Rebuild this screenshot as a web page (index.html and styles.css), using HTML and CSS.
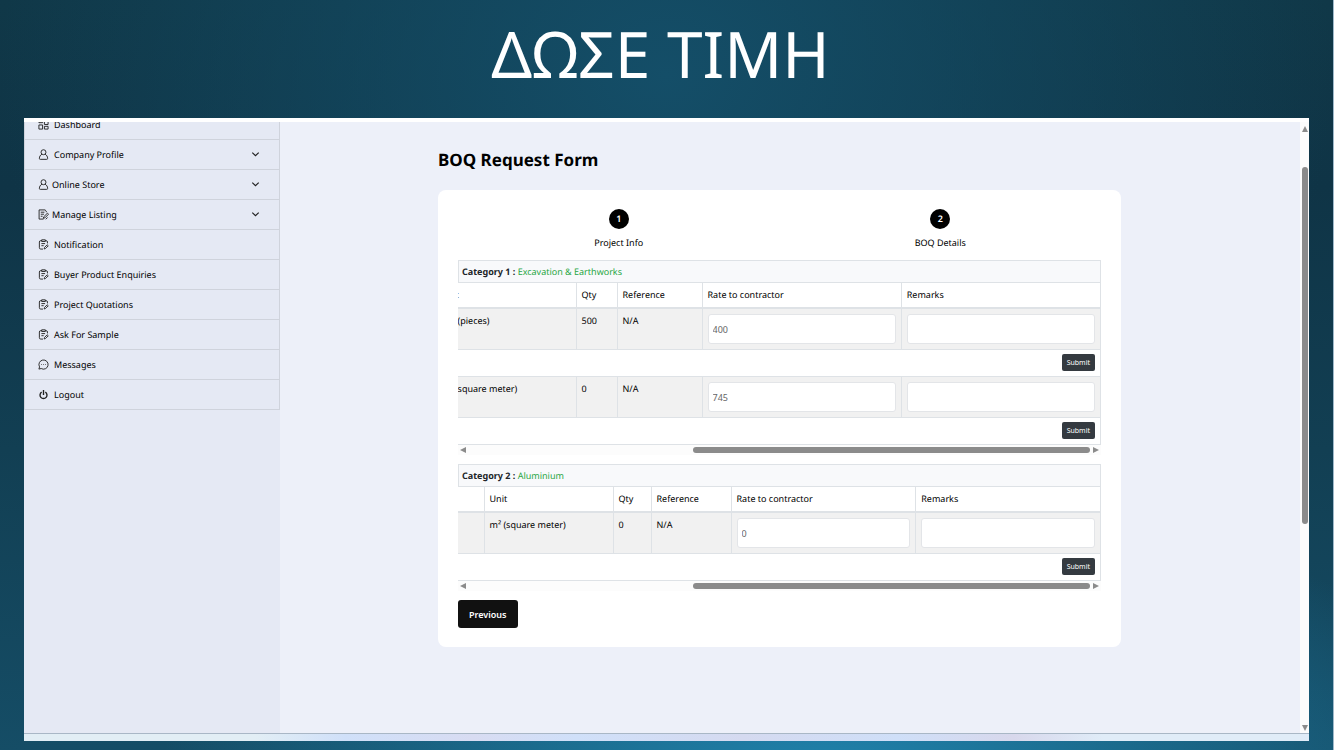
FILE: index.html
```html
<!DOCTYPE html>
<html lang="el">
<head>
<meta charset="utf-8">
<meta name="viewport" content="width=device-width, initial-scale=1">
<title>ΔΩΣΕ ΤΙΜΗ</title>
<link rel="stylesheet" href="styles.css">
</head>
<body>
<svg class="sprite" aria-hidden="true">
  <symbol id="i-grid" viewBox="0 0 12 12"><path d="M1 1h4v3H1zM1 6.500h4V11H1zM7 1h4v5H7zM7 8h4v3H7z"/></symbol>
  <symbol id="i-user" viewBox="0 0 12 12"><circle cx="6" cy="3.500" r="2.700"/><path d="M4.300 5.600C2.600 6.600 1.500 8.200 1.500 10.300c0 .7.300 1 1 1h7c.7 0 1-.3 1-1 0-2.100-1.100-3.700-2.800-4.700"/></symbol>
  <symbol id="i-edit" viewBox="0 0 12 12"><path d="M9 3.500V2.300L7.700 1H1.200v10H6M3 3.500h4M3 5.700h3.500M3 7.900h2"/><path d="M10.300 4.500l1.200 1.200-4 4-1.700.5.500-1.700zM8.500 11.200l2-2"/></symbol>
  <symbol id="i-clip" viewBox="0 0 12 12"><path d="M4 1.800H3C2 1.800 1.500 2.300 1.500 3.300v6.200c0 1 .5 1.500 1.500 1.500h2.500M8 1.800h.8c1 0 1.500.5 1.500 1.500v1.500M4 .9h4v1.800H4zM3.700 5h4M3.700 7.300h2.500"/><path d="M10 6.300l1.200 1.100-3 3-1.500.5.400-1.600z"/></symbol>
  <symbol id="i-chat" viewBox="0 0 12 12"><path d="M1.700 8.600A5 5 0 1 1 3.500 10.400L1 11z"/><path d="M3.600 6h.7M5.700 6h.7M7.800 6h.7"/></symbol>
  <symbol id="i-power" viewBox="0 0 12 12"><path d="M4 3.400a3.800 3.800 0 1 0 4 0M6 1v5.500"/></symbol>
  <symbol id="i-down" viewBox="0 0 12 12"><path d="M2.500 4L6 7.300 9.500 4"/></symbol>
</svg>
<div class="slide">
  <header class="slide-title"><h1>ΔΩΣΕ ΤΙΜΗ</h1></header>
  <div class="window">
    <div class="viewport">
      <nav class="sidebar">
        <a class="item" href="#"><svg><use href="#i-grid"/></svg>Dashboard</a>
        <a class="item" href="#"><svg><use href="#i-user"/></svg>Company Profile<svg class="chevron"><use href="#i-down"/></svg></a>
        <a class="item tight" href="#"><svg><use href="#i-user"/></svg>Online Store<svg class="chevron"><use href="#i-down"/></svg></a>
        <a class="item tight" href="#"><svg><use href="#i-edit"/></svg>Manage Listing<svg class="chevron"><use href="#i-down"/></svg></a>
        <a class="item" href="#"><svg><use href="#i-clip"/></svg>Notification</a>
        <a class="item" href="#"><svg><use href="#i-clip"/></svg>Buyer Product Enquiries</a>
        <a class="item" href="#"><svg><use href="#i-clip"/></svg>Project Quotations</a>
        <a class="item" href="#"><svg><use href="#i-clip"/></svg>Ask For Sample</a>
        <a class="item" href="#"><svg><use href="#i-chat"/></svg>Messages</a>
        <a class="item" href="#"><svg class="heavy"><use href="#i-power"/></svg>Logout</a>
      </nav>
      <main class="content">
        <h2 class="page-title">BOQ Request Form</h2>
        <form class="card">
          <ol class="steps">
            <li><span class="dot">1</span>Project Info</li>
            <li><span class="dot">2</span>BOQ Details</li>
          </ol>
          <section class="category">
            <h3 class="cat-title">Category 1 : <span>Excavation &amp; Earthworks</span></h3>
            <div class="table-clip">
              <table class="boq boq-one">
                <colgroup><col class="unit"><col class="qty"><col class="ref"><col><col></colgroup>
                <thead><tr><th>Unit</th><th>Qty</th><th>Reference</th><th>Rate to contractor</th><th>Remarks</th></tr></thead>
                <tbody>
                  <tr class="data"><td>pcs (pieces)</td><td>500</td><td>N/A</td><td><input type="text" aria-label="Rate to contractor" value="400"></td><td><input type="text" aria-label="Remarks"></td></tr>
                  <tr class="action"><td colspan="5"><button type="button" class="submit">Submit</button></td></tr>
                  <tr class="data"><td>m² (square meter)</td><td>0</td><td>N/A</td><td><input type="text" aria-label="Rate to contractor" value="745"></td><td><input type="text" aria-label="Remarks"></td></tr>
                  <tr class="action"><td colspan="5"><button type="button" class="submit">Submit</button></td></tr>
                </tbody>
              </table>
            </div>
            <div class="hscroll"><svg viewBox="0 0 6 6"><path d="M6 0v6L0 3z"/></svg><div class="track"><div class="thumb"></div></div><svg viewBox="0 0 6 6"><path d="M0 0v6l6-3z"/></svg></div>
          </section>
          <section class="category">
            <h3 class="cat-title">Category 2 : <span>Aluminium</span></h3>
            <div class="table-clip">
              <table class="boq boq-two">
                <colgroup><col class="lead"><col class="unit"><col class="qty"><col class="ref"><col><col></colgroup>
                <thead><tr><th></th><th>Unit</th><th>Qty</th><th>Reference</th><th>Rate to contractor</th><th>Remarks</th></tr></thead>
                <tbody>
                  <tr class="data"><td></td><td>m² (square meter)</td><td>0</td><td>N/A</td><td><input type="text" aria-label="Rate to contractor" value="0"></td><td><input type="text" aria-label="Remarks"></td></tr>
                  <tr class="action"><td colspan="6"><button type="button" class="submit">Submit</button></td></tr>
                </tbody>
              </table>
            </div>
            <div class="hscroll"><svg viewBox="0 0 6 6"><path d="M6 0v6L0 3z"/></svg><div class="track"><div class="thumb"></div></div><svg viewBox="0 0 6 6"><path d="M0 0v6l6-3z"/></svg></div>
          </section>
          <button type="button" class="previous">Previous</button>
        </form>
      </main>
      <div class="vscroll"><svg viewBox="0 0 6 6"><path d="M3 0l3 6H0z"/></svg><div class="vtrack"><div class="vthumb"></div></div><svg viewBox="0 0 6 6"><path d="M0 0h6L3 6z"/></svg></div>
    </div>
    <div class="taskbar"></div>
  </div>
</div>
</body>
</html>
```

FILE: styles.css
```css
* { box-sizing: border-box; }

body {
  margin: 0;
  font-family: "Noto Sans", sans-serif;
  font-size: 9px;
  line-height: 14px;
  color: #000;
  text-rendering: geometricPrecision;
}

h1, h2, h3, ol { margin: 0; padding: 0; }

.sprite { display: none; }

.slide {
  display: flex;
  flex-direction: column;
  min-height: 100vh;
  padding: 0 24px 9px;
  border-right: 1px solid #9fb9ca;
  background:
    radial-gradient(ellipse 50% 40% at 62% 104%, #2083ad 0%, #2083ad00 100%),
    radial-gradient(ellipse 50% 75% at 50% 10%, #144e68 0%, #144e6800 100%),
    linear-gradient(#103848 0%, #0f3446 25%, #123f53 60%, #154d66 100%);
}

.slide-title {
  display: flex;
  align-items: center;
  justify-content: center;
  height: 118px;
  padding-bottom: 10px;
  padding-right: 12px;
}

.slide-title h1 {
  font-size: 64px;
  font-weight: 400;
  line-height: 88px;
  color: #fff;
}

.window {
  display: flex;
  flex: 1;
  flex-direction: column;
  border-top: 4px solid #fff;
}

.viewport {
  display: flex;
  flex: 1;
  overflow: hidden;
  background: #edf0f9;
}

.sidebar {
  width: 256px;
  margin-top: -12px;
  background: #e5e9f4;
}

.item {
  display: flex;
  align-items: center;
  gap: 5px;
  height: 30px;
  padding: 0 18px 0 13px;
  border: 1px solid #cfd3dc;
  border-top: 0;
  color: #000;
  text-decoration: none;
}

.item.tight { gap: 3px; }

.item svg {
  width: 11px;
  height: 11px;
  fill: none;
  stroke: #222;
  stroke-width: 1;
}

.item .heavy { stroke-width: 1.5; }

.item .chevron {
  margin-left: auto;
  stroke-width: 1.3;
}

.content {
  flex: 1;
  padding: 27px 179px 0 158px;
}

.page-title {
  margin-bottom: 19px;
  font-size: 17px;
  font-weight: 700;
  line-height: 22px;
  color: #000;
}

.card {
  padding: 19px 20px;
  border-radius: 8px;
  background: #fff;
}

.steps {
  display: grid;
  grid-template-columns: 1fr 1fr;
  margin-bottom: 10px;
  list-style: none;
}

.steps li {
  display: flex;
  flex-direction: column;
  align-items: center;
  gap: 7px;
}

.dot {
  width: 20px;
  height: 20px;
  border-radius: 50%;
  background: #000;
  color: #fff;
  font-weight: 600;
  line-height: 20px;
  text-align: center;
}

.category { margin-bottom: 9px; }

.cat-title {
  padding: 4px 3px 3px;
  border: 1px solid #dee2e6;
  border-bottom: 0;
  background: #f8f9fb;
  color: #212529;
  font-size: 9px;
  font-weight: 700;
}

.cat-title span {
  color: #28a745;
  font-weight: 400;
}

.table-clip {
  display: flex;
  justify-content: flex-end;
  overflow: hidden;
}

.boq {
  flex: none;
  width: 100%;
  border-collapse: collapse;
  table-layout: fixed;
}

.boq-one { width: calc(100% + 22px); }
.boq-one .unit { width: 140px; }
.boq-one .qty { width: 41px; }
.boq-one .ref { width: 85px; }
.boq-two .lead { width: 26px; }
.boq-two .unit { width: 129px; }
.boq-two .qty { width: 38px; }
.boq-two .ref { width: 80px; }

.boq th,
.boq td {
  padding: 5px;
  border: 1px solid #dee2e6;
  font-weight: 400;
  text-align: left;
  vertical-align: top;
  white-space: nowrap;
}

.boq th:first-child,
.boq td:first-child { border-left: 0; }

.boq th { border-bottom: 2px solid #dee2e6; }

.data { background: #f1f1f1; }

.data input {
  display: block;
  width: 100%;
  height: 30px;
  padding: 0 4px;
  border: 1px solid #e3e5e8;
  border-radius: 3px;
  background: #fff;
  color: #666;
  font: inherit;
}

.boq .action td {
  padding: 4px 5px 5px;
  text-align: right;
}

.submit {
  display: inline-block;
  height: 17px;
  padding: 0 5px;
  border: 0;
  border-radius: 2px;
  background: #343a40;
  color: #fff;
  font-family: inherit;
  font-size: 7px;
  line-height: 17px;
  vertical-align: top;
}

.hscroll {
  display: flex;
  align-items: center;
  gap: 3px;
  height: 10px;
  padding: 0 2px;
  background: #fcfcfc;
}

.hscroll svg,
.vscroll svg {
  flex: none;
  width: 6px;
  height: 6px;
  fill: #8b8b8b;
}

.track { flex: 1; }

.thumb {
  width: 64%;
  height: 6px;
  margin-left: auto;
  border-radius: 3px;
  background: #8b8b8b;
}

.previous {
  display: block;
  height: 28px;
  padding: 0 11px;
  border: 0;
  border-radius: 3px;
  background: #111;
  color: #fff;
  font-family: inherit;
  font-size: 9px;
  font-weight: 600;
}

.vscroll {
  display: flex;
  flex-direction: column;
  align-items: center;
  width: 9px;
  padding: 4px 0 2px;
  background: #fcfcfc;
}

.vtrack {
  flex: 1;
  padding-top: 35px;
}

.vthumb {
  width: 6px;
  height: 64%;
  border-radius: 3px;
  background: #8b8b8b;
}

.taskbar {
  height: 8px;
  border-top: 1px solid #a9b7c6;
  background: linear-gradient(90deg, #e2eef5 18%, #d0e0f9 25%, #d8dcf2 35%, #d0e0f9 43%, #d5daf0 56%, #cfdff8 68%, #d8d8ec 77%, #e0ecf8 84%);
}
```
